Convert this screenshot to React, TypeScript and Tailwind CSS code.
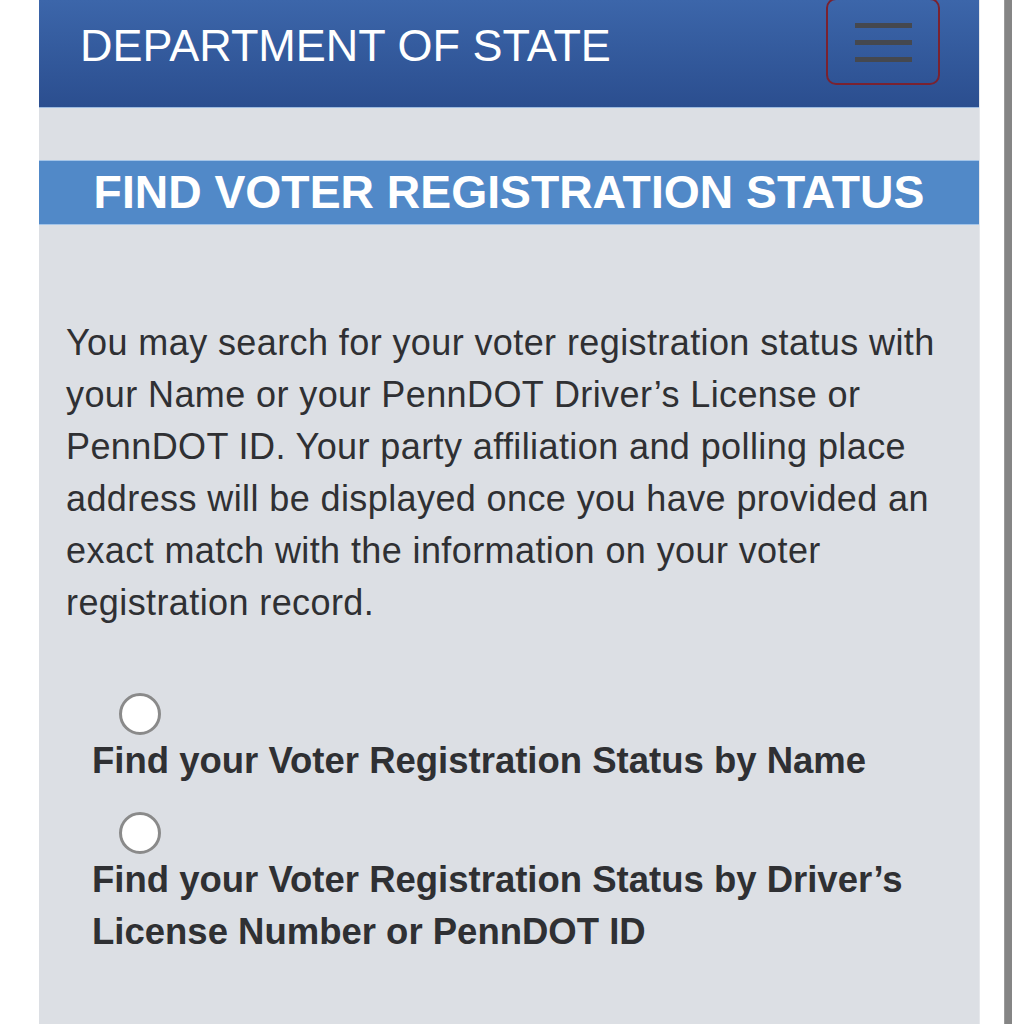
import React from "react";

function Radio() {
  return (
    <span className="block w-[42px] h-[42px] rounded-full border-[3px] border-[#8a8a8a] bg-white" />
  );
}

export default function App() {
  return (
    <div
      className="flex h-[1024px] w-[1020px] overflow-hidden bg-white"
      style={{ fontFamily: '"Liberation Sans", Arial, Helvetica, sans-serif' }}
    >
      <div className="w-[39px] shrink-0" />
      <div className="w-[941px] shrink-0 bg-[#dcdfe4] border-r border-[#e6e8ec] flex flex-col">
        {/* Header */}
        <div className="h-[108px] shrink-0 flex items-start justify-between bg-gradient-to-b from-[#3c66aa] to-[#2b4e8f] border-b border-[#9dbbe0]">
          <div className="pl-[41px] pt-[22px] text-[45px] leading-[48px] text-white whitespace-nowrap">
            DEPARTMENT OF STATE
          </div>
          <button className="mr-[39px] -mt-[2px] h-[87px] w-[114px] rounded-[10px] border-2 border-[#7a2230] flex flex-col items-center justify-center gap-[12px] pt-[2px]">
            <span className="block w-[57px] h-[5px] bg-[#45484f]" />
            <span className="block w-[57px] h-[5px] bg-[#45484f]" />
            <span className="block w-[57px] h-[5px] bg-[#45484f]" />
          </button>
        </div>

        {/* Title bar */}
        <div className="mt-[52px] h-[65px] shrink-0 flex items-center justify-center bg-[#5189c8] border-y border-[#a3c4e8]">
          <h1 className="text-[46.3px] leading-none font-bold text-white whitespace-nowrap">
            FIND VOTER REGISTRATION STATUS
          </h1>
        </div>

        {/* Paragraph */}
        <p className="mt-[92px] pl-[27px] pr-[20px] text-[36px] leading-[52px] tracking-[0.4px] text-[#2f3033]">
          You may search for your voter registration status with your Name or your PennDOT Driver’s License or PennDOT ID. Your party affiliation and polling place address will be displayed once you have provided an exact match with the information on your voter registration record.
        </p>

        {/* Options */}
        <div className="mt-[64px] flex flex-col">
          <div className="pl-[80px]">
            <Radio />
          </div>
          <div className="pl-[53px] text-[36.5px] leading-[52px] font-bold text-[#2f3033]">
            Find your Voter Registration Status by Name
          </div>
          <div className="pl-[80px] mt-[25px]">
            <Radio />
          </div>
          <div className="pl-[53px] pr-[40px] text-[36.5px] leading-[52px] font-bold text-[#2f3033]">
            Find your Voter Registration Status by Driver’s License Number or PennDOT ID
          </div>
        </div>
      </div>
      <div className="w-[24px] shrink-0" />
      <div className="w-[8px] shrink-0 bg-[#858585] border-l border-[#9a9a9a]" />
      <div className="flex-1" />
    </div>
  );
}
